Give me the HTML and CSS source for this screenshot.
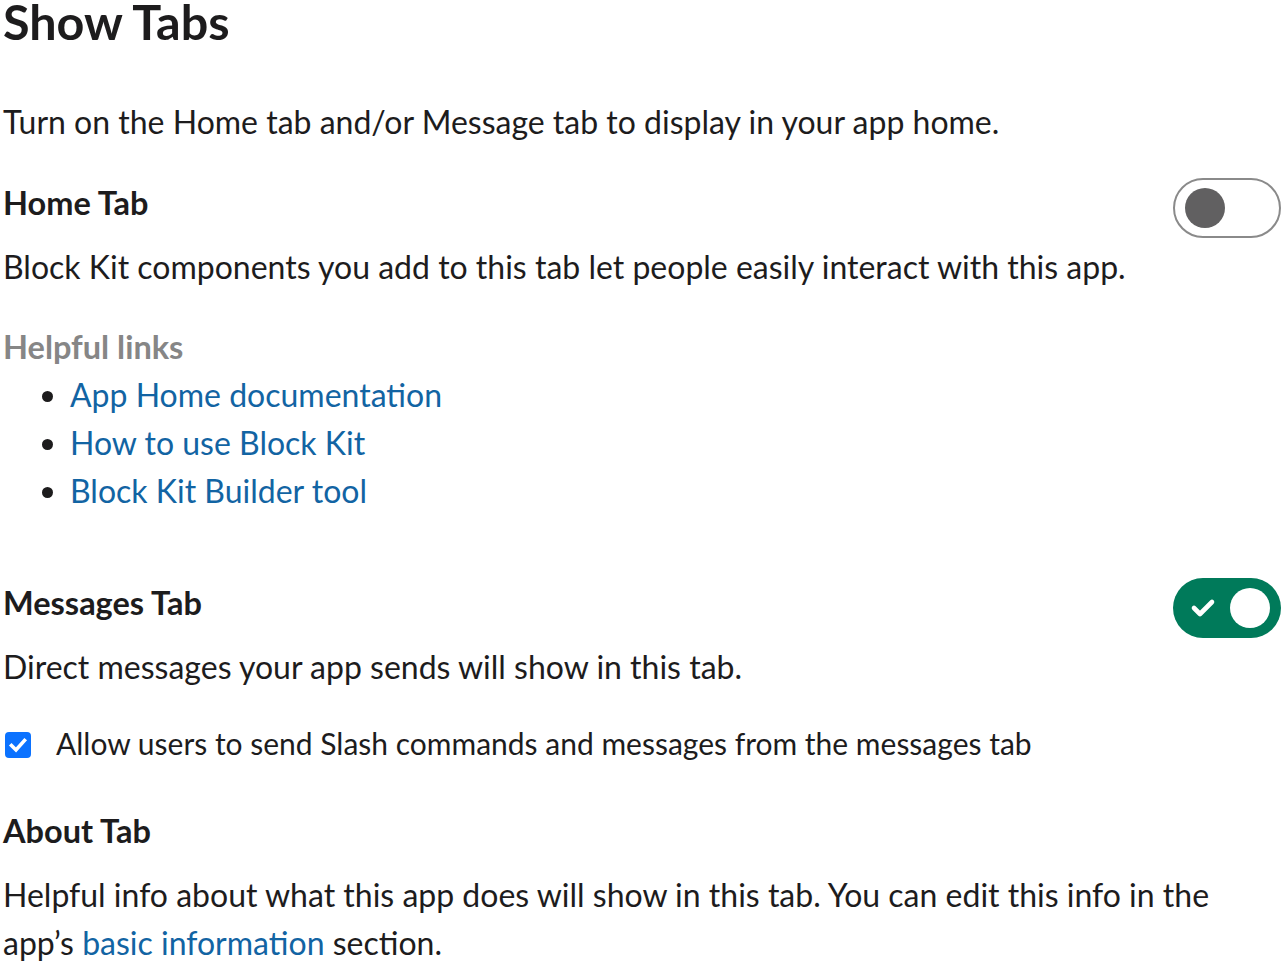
FILE: index.html
```html
<!DOCTYPE html>
<html>
<head>
<meta charset="utf-8">
<link rel="stylesheet" href="styles.css">
</head>
<body>
<div class="page">
  <h1 class="title">Show Tabs</h1>
  <p class="intro">Turn on the Home tab and/or Message tab to display in your app home.</p>

  <section class="tab-section home">
    <div class="tab-head">
      <h2 class="tab-title">Home Tab</h2>
      <span class="toggle off"><span class="knob"></span></span>
    </div>
    <p class="desc">Block Kit components you add to this tab let people easily interact with this app.</p>
    <h3 class="links-title">Helpful links</h3>
    <ul class="links">
      <li><a href="#">App Home documentation</a></li>
      <li><a href="#">How to use Block Kit</a></li>
      <li><a href="#">Block Kit Builder tool</a></li>
    </ul>
  </section>

  <section class="tab-section messages">
    <div class="tab-head">
      <h2 class="tab-title">Messages Tab</h2>
      <span class="toggle on">
        <svg class="check" viewBox="0 0 26 22" width="26" height="22"><path d="M4 11 L10 17 L22 5" fill="none" stroke="#fff" stroke-width="4.6" stroke-linecap="round" stroke-linejoin="round"/></svg>
        <span class="knob"></span>
      </span>
    </div>
    <p class="desc">Direct messages your app sends will show in this tab.</p>
    <label class="checkrow">
      <span class="checkbox"><svg viewBox="0 0 26 26" width="26" height="26"><path d="M6.5 13.5 L11 18 L19.5 8.5" fill="none" stroke="#fff" stroke-width="3.6" stroke-linecap="square" stroke-linejoin="miter"/></svg></span>
      <span class="checklabel">Allow users to send Slash commands and messages from the messages tab</span>
    </label>
  </section>

  <section class="tab-section about">
    <h2 class="tab-title">About Tab</h2>
    <p class="desc">Helpful info about what this app does will show in this tab. You can edit this info in the app’s <a href="#">basic information</a> section.</p>
  </section>
</div>
</body>
</html>
```
FILE: styles.css
```css
* { box-sizing: border-box; }
html, body { margin: 0; padding: 0; background: #fff; }
body {
  font-family: Lato, "Noto Sans", sans-serif;
  color: #1d1c1d;
  font-size: 32px;
  line-height: 48px;
}
.page {
  width: 1281px;
  padding-left: 3px;
}
.title {
  margin: 0;
  font-size: 48.5px;
  line-height: 42px;
  font-weight: 700;
}
.intro {
  margin: 56px 0 0;
}
.tab-section.home { margin-top: 33px; }
.tab-section.messages { margin-top: 64px; }
.tab-section.about { margin-top: 40px; }
.tab-head {
  display: flex;
  justify-content: space-between;
  align-items: flex-start;
  height: 48px;
}
.tab-title {
  margin: 0;
  font-size: 32.5px;
  line-height: 48px;
  font-weight: 700;
}
.desc {
  margin: 16px 0 0;
  width: 1240px;
}
.links-title {
  margin: 32px 0 0;
  font-size: 32.5px;
  line-height: 48px;
  font-weight: 700;
  color: #868686;
}
.links {
  margin: 0;
  padding-left: 67px;
}
.links li { line-height: 48px; }
a { color: #1264a3; text-decoration: none; }
.toggle {
  position: relative;
  display: flex;
  align-items: center;
  flex: none;
  width: 108px;
  height: 60px;
  border-radius: 30px;
  margin-top: -1px;
}
.toggle.off {
  border: 2px solid #8a8a8a;
  background: #fff;
  padding-left: 10px;
}
.toggle.off .knob {
  width: 40px; height: 40px;
  border-radius: 50%;
  background: #616061;
}
.toggle.on {
  background: #007a5a;
  justify-content: space-between;
  padding: 0 11px 0 17px;
}
.toggle.on .knob {
  width: 40px; height: 40px;
  border-radius: 50%;
  background: #fff;
}
.check { display: block; }
.checkrow {
  display: flex;
  align-items: flex-start;
  margin-top: 28px;
  font-size: 30px;
}
.checkbox {
  display: flex;
  align-items: center;
  justify-content: center;
  flex: none;
  width: 26px;
  height: 26px;
  border-radius: 4px;
  background: #0b72ff;
  margin: 13px 25px 0 2px;
}
.checkbox svg { display: block; }
```
